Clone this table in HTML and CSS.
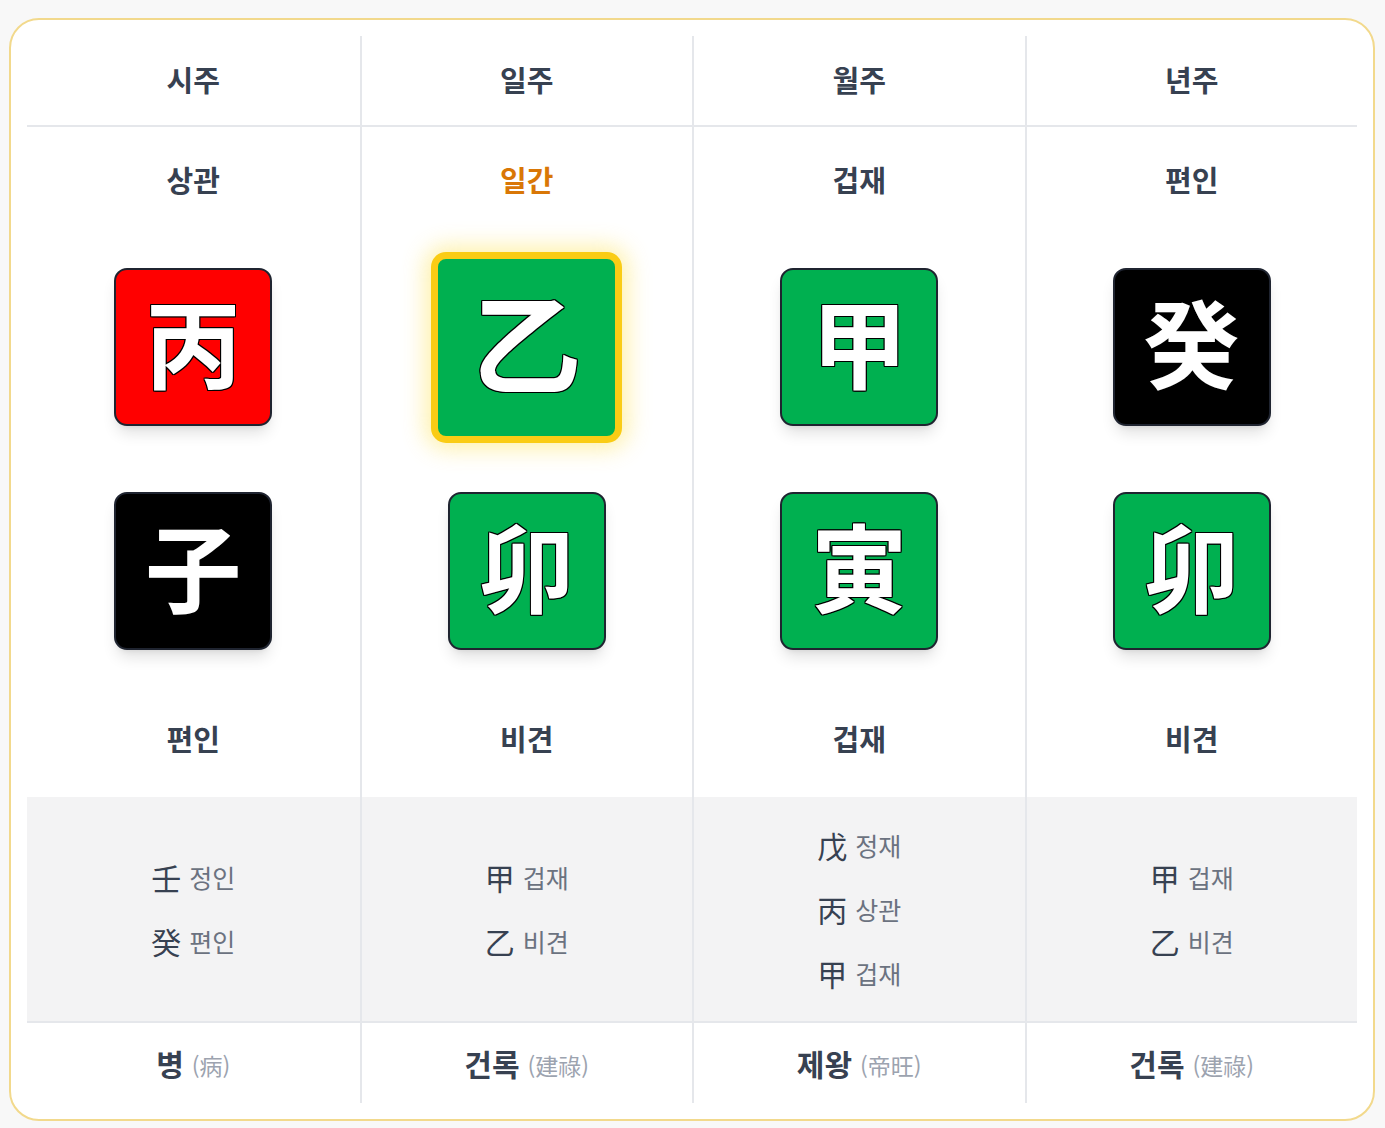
FILE: index.html
```html
<!DOCTYPE html>
<html lang="ko">
<head>
<meta charset="utf-8">
<link rel="stylesheet" href="styles.css">
</head>
<body>
<div class="card">
  <div class="row head">
    <div class="cell">시주</div>
    <div class="cell">일주</div>
    <div class="cell">월주</div>
    <div class="cell">년주</div>
  </div>
  <div class="row main">
    <div class="cell col">
      <div class="lbl">상관</div>
      <div class="slot"><div class="tile red">丙</div></div>
      <div class="slot"><div class="tile black">子</div></div>
      <div class="lbl">편인</div>
    </div>
    <div class="cell col">
      <div class="lbl me">일간</div>
      <div class="slot"><div class="tile green hl">乙</div></div>
      <div class="slot"><div class="tile green">卯</div></div>
      <div class="lbl">비견</div>
    </div>
    <div class="cell col">
      <div class="lbl">겁재</div>
      <div class="slot"><div class="tile green">甲</div></div>
      <div class="slot"><div class="tile green">寅</div></div>
      <div class="lbl">겁재</div>
    </div>
    <div class="cell col">
      <div class="lbl">편인</div>
      <div class="slot"><div class="tile black">癸</div></div>
      <div class="slot"><div class="tile green">卯</div></div>
      <div class="lbl">비견</div>
    </div>
  </div>
  <div class="row hidden">
    <div class="cell stems">
      <div class="stem"><span class="hz">壬</span><span class="ss">정인</span></div>
      <div class="stem"><span class="hz">癸</span><span class="ss">편인</span></div>
    </div>
    <div class="cell stems">
      <div class="stem"><span class="hz">甲</span><span class="ss">겁재</span></div>
      <div class="stem"><span class="hz">乙</span><span class="ss">비견</span></div>
    </div>
    <div class="cell stems">
      <div class="stem"><span class="hz">戊</span><span class="ss">정재</span></div>
      <div class="stem"><span class="hz">丙</span><span class="ss">상관</span></div>
      <div class="stem"><span class="hz">甲</span><span class="ss">겁재</span></div>
    </div>
    <div class="cell stems">
      <div class="stem"><span class="hz">甲</span><span class="ss">겁재</span></div>
      <div class="stem"><span class="hz">乙</span><span class="ss">비견</span></div>
    </div>
  </div>
  <div class="row foot">
    <div class="cell"><span class="st">병</span><span class="han">(病)</span></div>
    <div class="cell"><span class="st">건록</span><span class="han">(建祿)</span></div>
    <div class="cell"><span class="st">제왕</span><span class="han">(帝旺)</span></div>
    <div class="cell"><span class="st">건록</span><span class="han">(建祿)</span></div>
  </div>
</div>
</body>
</html>
```
FILE: styles.css
```css
* { box-sizing: border-box; }
html, body { margin: 0; padding: 0; }
body {
  background: #f8f8f8;
  font-family: "Noto Sans CJK KR", "Noto Sans", sans-serif;
  color: #374151;
  padding: 18px 10px 0 9px;
}
.card {
  width: 1366px;
  height: 1103px;
  background: #fff;
  border: 2px solid #f2d98c;
  border-radius: 30px;
  padding: 16px;
}
.row {
  display: grid;
  grid-template-columns: repeat(4, 1fr);
}
.cell {
  display: flex;
  align-items: center;
  justify-content: center;
  border-left: 2px solid #e5e7eb;
}
.cell:first-child { border-left: none; }
.head {
  height: 91px;
  border-bottom: 2px solid #e5e7eb;
}
.head .cell {
  font-size: 29px;
  font-weight: 700;
  line-height: 40px;
  padding-bottom: 4px;
}
.main { height: 670px; }
.col {
  flex-direction: column;
  justify-content: flex-start;
  padding-top: 32px;
}
.lbl {
  font-size: 29px;
  font-weight: 700;
  line-height: 40px;
  height: 40px;
}
.lbl.me { color: #d97706; }
.slot {
  width: 158px;
  height: 158px;
  display: flex;
  align-items: center;
  justify-content: center;
}
.col .slot:nth-child(2) { margin-top: 69px; }
.col .slot:nth-child(3) { margin-top: 66px; }
.col .lbl:last-child { margin-top: 68px; }
.tile {
  flex: none;
  width: 158px;
  height: 158px;
  border: 2px solid #1f2430;
  border-radius: 13px;
  display: flex;
  align-items: center;
  justify-content: center;
  padding-bottom: 14px;
  color: #fff;
  font-family: "Noto Sans CJK KR", "Noto Sans CJK SC", sans-serif;
  font-weight: 700;
  font-size: 96px;
  line-height: 1;
  text-shadow: 1px 1px 0 #000, -1px -1px 0 #000, 1px -1px 0 #000, -1px 1px 0 #000, 0 1px 0 #000, 0 -1px 0 #000, 1px 0 0 #000, -1px 0 0 #000;
  box-shadow: 0 10px 15px -3px rgba(0,0,0,0.12), 0 4px 6px -4px rgba(0,0,0,0.1);
}
.red { background: #ff0000; }
.green { background: #00b050; }
.black { background: #000; }
.tile.hl {
  width: 191px;
  height: 191px;
  border: 7px solid #facc15;
  border-radius: 15px;
  font-size: 110px;
  padding-bottom: 16px;
  box-shadow: 0 0 22px 6px rgba(253, 224, 71, 0.45);
}
.hidden {
  height: 226px;
  background: #f3f3f4;
  border-bottom: 2px solid #e5e7eb;
}
.stems {
  flex-direction: column;
  gap: 24px;
}
.stem {
  display: flex;
  align-items: center;
  height: 40px;
}
.hz {
  font-size: 30px;
  font-weight: 400;
  color: #374151;
  margin-right: 8px;
  line-height: 40px;
}
.ss {
  font-size: 25px;
  color: #6b7280;
  line-height: 40px;
}
.foot { height: 80px; }
.foot .cell { align-items: center; }
.st {
  font-size: 30px;
  font-weight: 700;
  color: #374151;
  line-height: 40px;
}
.han {
  font-size: 23px;
  color: #9ca3af;
  margin-left: 8px;
  line-height: 40px;
  padding-top: 4px;
}
```
